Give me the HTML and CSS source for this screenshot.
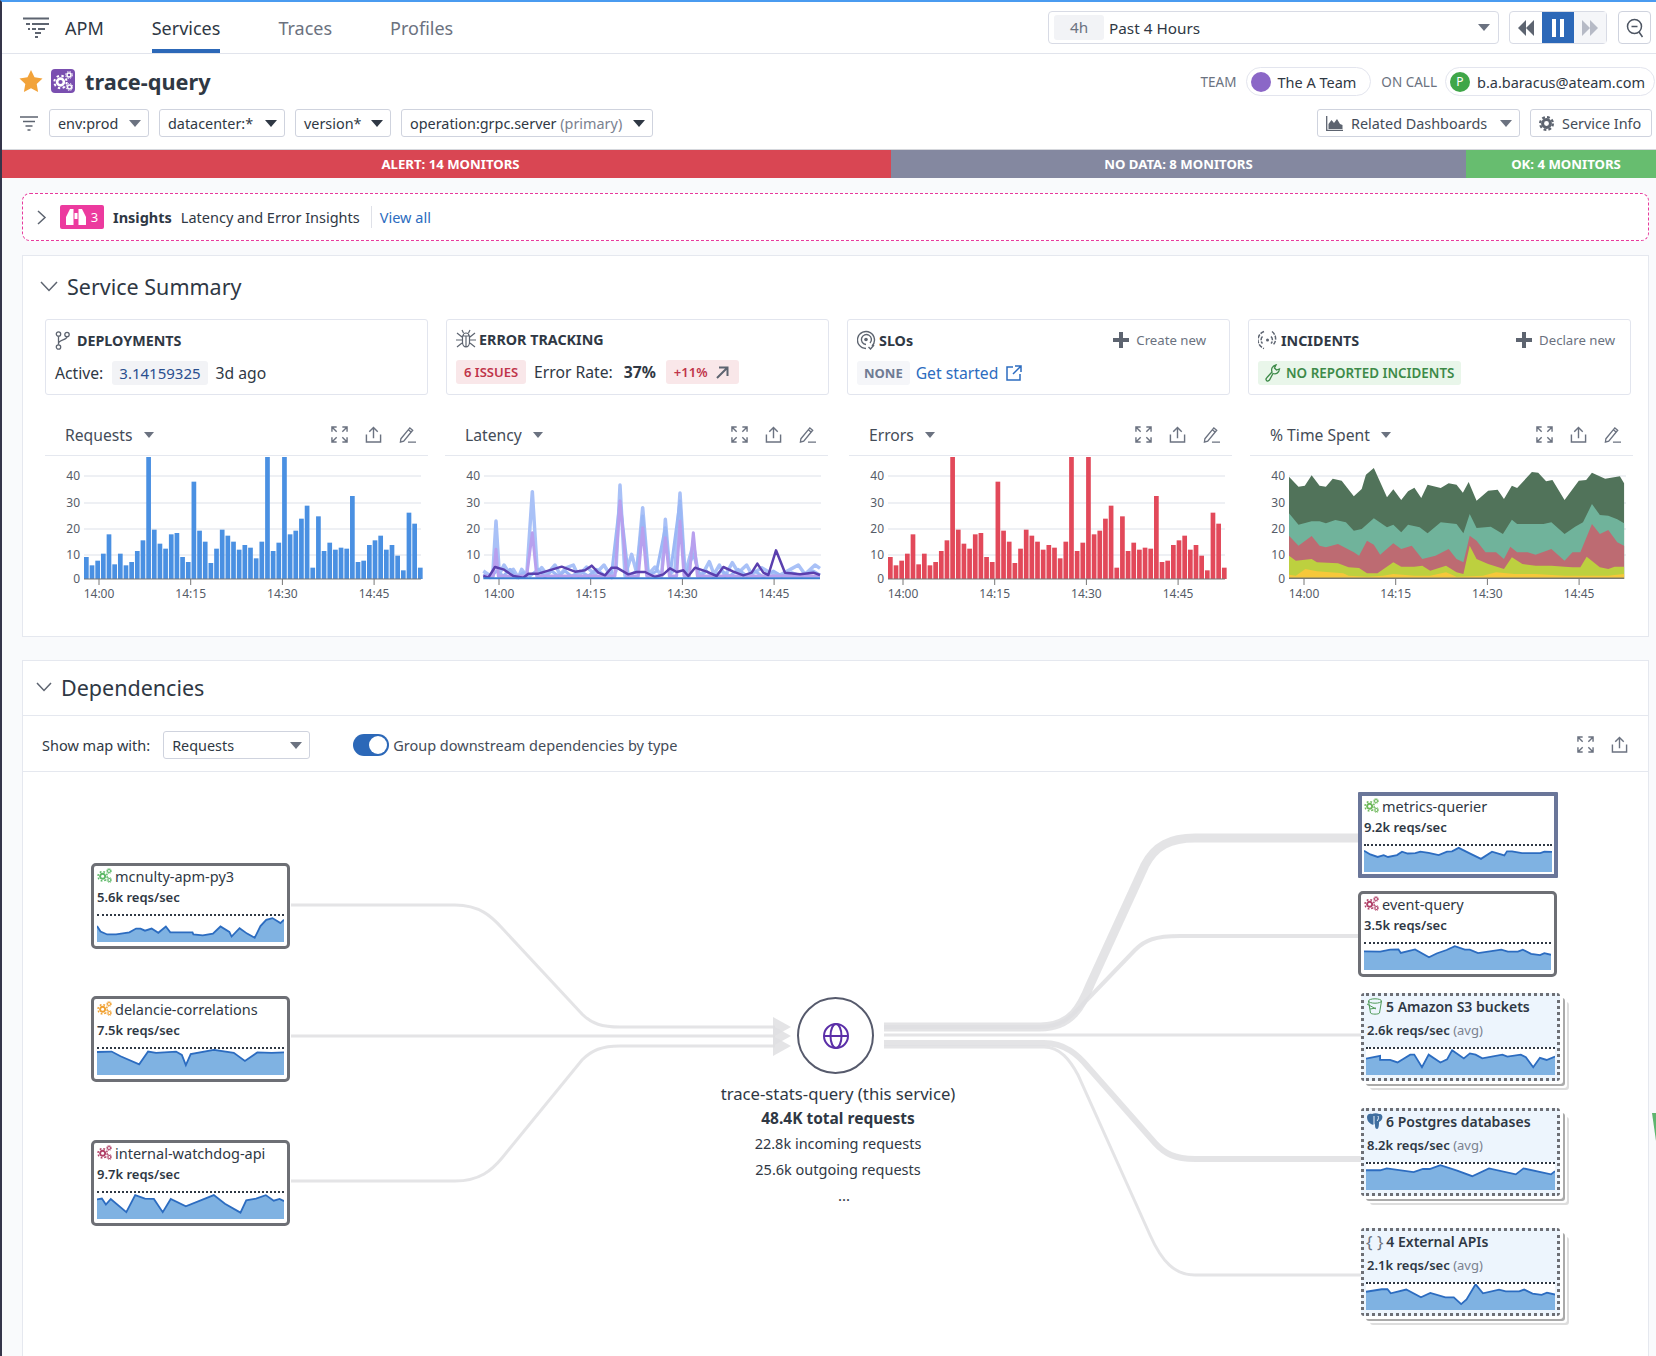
FILE: index.html
```html
<!DOCTYPE html>
<html lang="en">

<head>
  <meta name="viewport" content="width=device-width">
  <title>trace-query | APM</title>
  <link rel="stylesheet" href="styles.css">
  <script src="script.js" defer></script>
</head>

<body>
  <svg class="defs" width="0" height="0">
    <symbol id="gears" viewBox="0 0 20 20">
      <circle cx="7.5" cy="11" r="3.4" fill="none" stroke="currentColor" stroke-width="2.6" />
      <circle cx="7.5" cy="11" r="6.2" fill="none" stroke="currentColor" stroke-width="2" stroke-dasharray="2.4 2.5" />
      <circle cx="16" cy="4" r="2" fill="none" stroke="currentColor" stroke-width="1.5" />
      <circle cx="16" cy="4" r="3.4" fill="none" stroke="currentColor" stroke-width="1" stroke-dasharray="1.5 1.2" />
      <circle cx="16.5" cy="16" r="2" fill="none" stroke="currentColor" stroke-width="1.5" />
      <circle cx="16.5" cy="16" r="3.4" fill="none" stroke="currentColor" stroke-width="1" stroke-dasharray="1.5 1.2" />
    </symbol>
    <symbol id="expand" viewBox="0 0 18 18">
      <path d="M1 6V1h5M1 1l5 5M12 1h5v5M17 1l-5 5M1 12v5h5M1 17l5-5M17 12v5h-5M17 17l-5-5" fill="none" stroke="currentColor" stroke-width="1.5" />
    </symbol>
    <symbol id="upload" viewBox="0 0 18 18">
      <path d="M1.5 9v8h15V9M9 13V1.500M4.500 6L9 1.500 13.500 6" fill="none" stroke="currentColor" stroke-width="1.500" />
    </symbol>
    <symbol id="pencil" viewBox="0 0 18 18">
      <path d="M2 13.500L11.500 2l3 2.500L5 16l-3.500 1zM9.500 17H18M10 4l3 2.500" fill="none" stroke="currentColor" stroke-width="1.400" />
    </symbol>
    <symbol id="plus" viewBox="0 0 16 16">
      <path d="M8 0v16M0 8h16" stroke="currentColor" stroke-width="4" />
    </symbol>
    <symbol id="filters" viewBox="0 0 18 15">
      <path d="M0 1h18M3 5.500h12M5.500 10h7M7.500 14h3" stroke="currentColor" stroke-width="1.600" />
    </symbol>
  </svg>

  <nav class="topnav">
    <svg class="nav-logo" viewBox="0 0 26 21" width="26" height="21">
      <path d="M0 1.500h26M3 7h4M9 7h17M5 12h2M9 12h4M15 12h7M12 16h6M12 20h3" stroke="#5d6470" stroke-width="2" />
    </svg>
    <span class="nav-title">APM</span>
    <a class="tab active">Services</a>
    <a class="tab">Traces</a>
    <a class="tab">Profiles</a>
    <div class="nav-right">
      <div class="timepicker">
        <span class="time-chip">4h</span>
        <span class="time-label">Past 4 Hours</span>
        <span class="caret"></span>
      </div>
      <div class="playback">
        <span class="play-btn">
          <svg width="18" height="16" viewBox="0 0 18 16"><path d="M9 0v16L1 8zM17 0v16L9 8z" fill="#5d6470" /></svg>
        </span>
        <span class="play-btn pause">
          <svg width="14" height="18" viewBox="0 0 14 18"><path d="M1 0h4v18H1zM9 0h4v18H9z" fill="#fff" /></svg>
        </span>
        <span class="play-btn off">
          <svg width="18" height="16" viewBox="0 0 18 16"><path d="M1 0v16l8-8zM9 0v16l8-8z" fill="#b6bac6" /></svg>
        </span>
      </div>
      <span class="zoom-btn">
        <svg width="18" height="20" viewBox="0 0 18 20">
          <circle cx="8.500" cy="8.500" r="7" fill="none" stroke="#4d5562" stroke-width="1.500" />
          <path d="M5.500 8.500h6M13 14l3.500 5" stroke="#4d5562" stroke-width="1.500" />
        </svg>
      </span>
    </div>
  </nav>

  <header class="service-head">
    <div class="title-row">
      <svg class="star" width="24" height="22" viewBox="0 0 24 22">
        <path d="M12 0l3.500 7.300 8 1.100-5.800 5.600 1.400 8L12 18.200 4.900 22l1.400-8L.5 8.400l8-1.100z" fill="#f2a33a" />
      </svg>
      <span class="service-icon">
        <svg width="20" height="20"><use href="#gears" /></svg>
      </span>
      <h1>trace-query</h1>
      <div class="owners">
        <span class="owner-label">TEAM</span>
        <span class="owner-pill team"><i class="dot purple"></i>The A Team</span>
        <span class="owner-label oncall">ON CALL</span>
        <span class="owner-pill"><i class="dot green">P</i>b.a.baracus@ateam.com</span>
      </div>
    </div>
    <div class="filter-row">
      <svg class="filter-icon" width="18" height="15"><use href="#filters" /></svg>
      <span class="pill w-env">env:prod<span class="caret soft"></span></span>
      <span class="pill w-dc">datacenter:*<span class="caret"></span></span>
      <span class="pill w-ver">version*<span class="caret"></span></span>
      <span class="pill w-op">operation:grpc.server&nbsp;<em>(primary)</em><span class="caret"></span></span>
      <div class="filter-right">
        <span class="btn w-rel">
          <svg width="17" height="15" viewBox="0 0 17 15"><path d="M.7 0v14.300H17" fill="none" stroke="#5d6470" stroke-width="1.300" /><path d="M2.500 13V8l3-4 2.500 3 3-4 3 5 2.500 1v4z" fill="#5d6470" /></svg>
          Related Dashboards<span class="caret soft"></span>
        </span>
        <span class="btn w-info">
          <svg width="15" height="15" viewBox="0 0 16 16"><circle cx="8" cy="8" r="4.200" fill="none" stroke="#5d6470" stroke-width="3.200" /><circle cx="8" cy="8" r="6.800" fill="none" stroke="#5d6470" stroke-width="2.400" stroke-dasharray="3 2.300" /></svg>
          Service Info
        </span>
      </div>
    </div>
  </header>

  <div class="monitors">
    <span class="mon alert">ALERT: 14 MONITORS</span>
    <span class="mon nodata">NO DATA: 8 MONITORS</span>
    <span class="mon ok">OK: 4 MONITORS</span>
  </div>

  <section class="insights">
    <svg class="chev-right" width="10" height="15" viewBox="0 0 10 15"><path d="M1 1l7 6.500L1 14" fill="none" stroke="#5d6470" stroke-width="1.500" /></svg>
    <span class="insight-badge">
      <svg width="20" height="18" viewBox="0 0 20 18"><path d="M4 1h3.500v16H.5a.5.500 0 0 1-.5-.5V9zM16 1h-3.500v16h7a.5.500 0 0 0 .5-.5V9zM8.500 5h3v6h-3z" fill="#fff" /></svg>
      3
    </span>
    <b>Insights</b>
    <span class="insight-text">Latency and Error Insights</span>
    <a class="link view-all">View all</a>
  </section>

  <section class="panel summary">
    <h2 class="summary-title">
      <svg width="18" height="11" viewBox="0 0 18 11"><path d="M1 1l8 8.500L17 1" fill="none" stroke="#5d6470" stroke-width="1.500" /></svg>
      Service Summary
    </h2>
    <div class="cards">
      <div class="card">
        <div class="card-top">
          <svg class="card-icon wide" width="15" height="19" viewBox="0 0 15 19">
            <circle cx="3.500" cy="3" r="2.200" fill="none" stroke="#5d6470" stroke-width="1.300" />
            <circle cx="3.500" cy="16" r="2.200" fill="none" stroke="#5d6470" stroke-width="1.300" />
            <circle cx="12" cy="3.500" r="2.200" fill="none" stroke="#5d6470" stroke-width="1.300" />
            <path d="M3.500 5.200v8.600M12 5.700c0 3.500-8.500 3-8.500 7" fill="none" stroke="#5d6470" stroke-width="1.300" />
          </svg>
          <span class="card-title">DEPLOYMENTS</span>
        </div>
        <div class="card-line">
          <span>Active:</span>
          <span class="chip version">3.14159325</span>
          <span>3d ago</span>
        </div>
      </div>
      <div class="card">
        <div class="card-top shift">
          <svg class="card-icon" width="20" height="20" viewBox="0 0 20 20">
            <path d="M6.500 7h7v6a3.500 5 0 0 1-7 0zM10 7v11M7 7a3 3 0 0 1 6 0M1 4l5 4M19 4l-5 4M0 11h6M20 11h-6M1 18l5-4M19 18l-5-4M6 1l1.500 3M14 1l-1.500 3" fill="none" stroke="#5d6470" stroke-width="1.200" />
          </svg>
          <span class="card-title">ERROR TRACKING</span>
        </div>
        <div class="card-line">
          <span class="chip red issues">6 ISSUES</span>
          <span class="rate-label">Error Rate:</span>
          <b class="rate-value">37%</b>
          <span class="chip red trend">+11%
            <svg width="13" height="13" viewBox="0 0 13 13"><path d="M1 12L11 2M3 1.500h8.500V10" fill="none" stroke="#5d6470" stroke-width="2" /></svg>
          </span>
        </div>
      </div>
      <div class="card">
        <div class="card-top">
          <svg class="card-icon" width="19" height="20" viewBox="0 0 19 20">
            <path d="M15 16a8.500 8.500 0 1 0-6 2.500" fill="none" stroke="#5d6470" stroke-width="1.400" />
            <path d="M13 13a5 5 0 1 0-4 1.500" fill="none" stroke="#5d6470" stroke-width="1.400" />
            <circle cx="9" cy="9.500" r="1.800" fill="#5d6470" />
            <path d="M11.500 17l2 2 3.500-4" fill="none" stroke="#5d6470" stroke-width="1.400" />
          </svg>
          <span class="card-title">SLOs</span>
          <span class="card-action">
            <svg width="16" height="16"><use href="#plus" /></svg>Create new
          </span>
        </div>
        <div class="card-line">
          <span class="chip none">NONE</span>
          <a class="link started">Get started</a>
          <svg width="16" height="16" viewBox="0 0 16 16"><path d="M7 2H1v13h13V9M9 1h6v6M15 1L7 9" fill="none" stroke="#2c6cc0" stroke-width="1.500" /></svg>
        </div>
      </div>
      <div class="card">
        <div class="card-top">
          <svg class="card-icon" width="20" height="20" viewBox="0 0 20 20">
            <path d="M6 1.500A9 9 0 0 0 6 18.500M4.500 6.500a5 5 0 0 0 0 7M14 1.500a9 9 0 0 1 1.500 13M13 6.500a5 5 0 0 1 0 7" fill="none" stroke="#5d6470" stroke-width="1.500" stroke-dasharray="4 1.200" />
            <circle cx="9.500" cy="10" r="1.500" fill="#5d6470" />
          </svg>
          <span class="card-title">INCIDENTS</span>
          <span class="card-action declare">
            <svg width="16" height="16"><use href="#plus" /></svg>Declare new
          </span>
        </div>
        <div class="card-line">
          <span class="chip good">
            <svg width="16" height="18" viewBox="0 0 16 18"><path d="M1.500 16.500c-1-1-.5-2 .5-3l5-5.500c-1-3 0-6 4-7l-1.500 3 2 2 3-1c-.5 4-3.500 5.500-6.500 4.500l-3.500 6.500c-1 1-2.500 1.500-3 .5z" fill="none" stroke="#3d8a48" stroke-width="1.300" /></svg>
            NO REPORTED INCIDENTS
          </span>
        </div>
      </div>
    </div>

    <div class="charts">
      <div class="chart">
        <div class="chart-head">
          <span class="chart-name">Requests</span><span class="caret soft"></span>
          <span class="chart-tools">
            <svg width="17" height="17"><use href="#expand" /></svg>
            <svg width="17" height="17"><use href="#upload" /></svg>
            <svg width="17" height="17"><use href="#pencil" /></svg>
          </span>
        </div>
        <svg class="plot" data-kind="bars" data-color="#4a90e2" width="383" height="150"></svg>
      </div>
      <div class="chart">
        <div class="chart-head">
          <span class="chart-name">Latency</span><span class="caret soft"></span>
          <span class="chart-tools">
            <svg width="17" height="17"><use href="#expand" /></svg>
            <svg width="17" height="17"><use href="#upload" /></svg>
            <svg width="17" height="17"><use href="#pencil" /></svg>
          </span>
        </div>
        <svg class="plot" data-kind="lines" width="383" height="150"></svg>
      </div>
      <div class="chart">
        <div class="chart-head">
          <span class="chart-name">Errors</span><span class="caret soft"></span>
          <span class="chart-tools">
            <svg width="17" height="17"><use href="#expand" /></svg>
            <svg width="17" height="17"><use href="#upload" /></svg>
            <svg width="17" height="17"><use href="#pencil" /></svg>
          </span>
        </div>
        <svg class="plot" data-kind="bars" data-color="#e2495a" width="383" height="150"></svg>
      </div>
      <div class="chart">
        <div class="chart-head">
          <span class="chart-name">% Time Spent</span><span class="caret soft"></span>
          <span class="chart-tools">
            <svg width="17" height="17"><use href="#expand" /></svg>
            <svg width="17" height="17"><use href="#upload" /></svg>
            <svg width="17" height="17"><use href="#pencil" /></svg>
          </span>
        </div>
        <svg class="plot" data-kind="areas" width="383" height="150"></svg>
      </div>
    </div>
  </section>

  <section class="panel deps">
    <h2 class="deps-title">
      <svg width="16" height="10" viewBox="0 0 16 10"><path d="M1 1l7 7.500L15 1" fill="none" stroke="#5d6470" stroke-width="1.500" /></svg>
      Dependencies
    </h2>
    <div class="deps-tools">
      <span class="show-label">Show map with:</span>
      <span class="select">Requests<span class="caret soft"></span></span>
      <span class="toggle"><i></i></span>
      <span class="toggle-label">Group downstream dependencies by type</span>
      <span class="deps-icons">
        <svg width="17" height="17"><use href="#expand" /></svg>
        <svg width="17" height="17"><use href="#upload" /></svg>
      </span>
    </div>

    <div class="map">
      <svg class="edges" width="1626" height="584" viewBox="23 772 1626 584">
        <g fill="none" stroke="#dfdfe2" stroke-opacity="0.85">
          <path stroke-width="3" d="M291 905H455C480 905 492 917 502 928L582 1014C592 1024 602 1027 620 1027H775" />
          <path stroke-width="3" d="M291 1036H775" />
          <path stroke-width="3" d="M291 1181H455C480 1181 492 1170 502 1158L582 1060C592 1050 602 1046 620 1046H775" />
          <path stroke-width="9" d="M884 1027H1040C1072 1027 1082 1005 1090 985L1145 865C1155 846 1170 838 1195 838H1358" />
          <path stroke-width="4" d="M884 1027H1040C1065 1027 1075 1012 1085 1002L1135 950C1145 940 1155 936 1180 936H1358" />
          <path stroke-width="3" d="M884 1035H1361" />
          <path stroke-width="6" d="M884 1043H1044C1065 1043 1078 1055 1088 1067L1155 1143C1165 1154 1175 1159 1195 1159H1361" />
          <path stroke-width="3" d="M884 1047H1044C1060 1047 1070 1060 1078 1075L1150 1235C1162 1262 1175 1275 1195 1275H1361" />
        </g>
        <g fill="#dfdfe2" fill-opacity="0.85">
          <path d="M773 1017l18 10-18 10z" />
          <path d="M773 1026l18 10-18 10z" />
          <path d="M773 1036l18 10-18 10z" />
        </g>
      </svg>

      <div class="hub">
        <svg width="28" height="28" viewBox="0 0 28 28">
          <g fill="none" stroke="#5b2fa8" stroke-width="2">
            <circle cx="14" cy="14" r="12" />
            <ellipse cx="14" cy="14" rx="5.500" ry="12" />
            <path d="M2 14h24" />
          </g>
        </svg>
      </div>
      <div class="hub-text">
        <div class="hub-name">trace-stats-query (this service)</div>
        <div class="hub-total">48.4K total requests</div>
        <div class="hub-sub">22.8k incoming requests</div>
        <div class="hub-sub">25.6k outgoing requests</div>
        <div class="hub-more">...</div>
      </div>

      <div class="node n-mcnulty">
        <div class="node-name"><svg class="c-green" width="15" height="15"><use href="#gears" /></svg>mcnulty-apm-py3</div>
        <div class="node-rate">5.6k reqs/sec</div>
        <svg class="spark" preserveAspectRatio="none" data-box="217 588 421 62" data-points="217,612 225,625 240,632 260,632 290,627 305,618 315,618 325,623 340,618 355,628 372,613 382,627 432,627 434,632 455,634 478,630 495,613 515,626 520,637 538,617 555,630 572,640 585,612 598,597 612,593 630,605 638,597"></svg>
      </div>
      <div class="node n-delancie">
        <div class="node-name"><svg class="c-orange" width="15" height="15"><use href="#gears" /></svg>delancie-correlations</div>
        <div class="node-rate">7.5k reqs/sec</div>
        <svg class="spark" preserveAspectRatio="none" data-box="217 886 421 61" data-points="217,893 250,892 270,903 312,922 332,892 350,895 395,892 408,900 417,924 428,898 480,888 525,895 550,914 578,894 610,895 638,894"></svg>
      </div>
      <div class="node n-internal">
        <div class="node-name"><svg class="c-rose" width="15" height="15"><use href="#gears" /></svg>internal-watchdog-api</div>
        <div class="node-rate">9.7k reqs/sec</div>
        <svg class="spark" preserveAspectRatio="none" data-box="217 1205 421 61" data-points="217,1220 228,1218 237,1232 248,1219 283,1250 303,1210 325,1218 345,1219 365,1250 383,1219 417,1236 480,1210 505,1230 540,1251 553,1222 575,1218 597,1210 615,1223 628,1219 638,1224"></svg>
      </div>

      <div class="node selected n-metrics">
        <div class="node-name"><svg class="c-lime" width="15" height="15"><use href="#gears" /></svg>metrics-querier</div>
        <div class="node-rate">9.2k reqs/sec</div>
        <svg class="spark" preserveAspectRatio="none" data-box="191 192 564 83" data-points="191,207 210,219 232,227 250,221 263,227 290,221 305,210 322,216 345,215 360,210 385,214 415,221 440,210 455,209 475,198 505,214 542,233 575,210 612,222 620,209 635,209 665,215 720,215 732,210 755,211"></svg>
      </div>
      <div class="node n-event">
        <div class="node-name"><svg class="c-rose" width="15" height="15"><use href="#gears" /></svg>event-query</div>
        <div class="node-rate">3.5k reqs/sec</div>
        <svg class="spark" preserveAspectRatio="none" data-box="191 490 564 82" data-points="191,513 240,514 270,508 295,507 302,518 345,507 387,532 410,520 440,509 465,497 495,508 510,508 535,519 605,508 625,514 655,514 670,508 695,521 722,525 735,519 755,524"></svg>
      </div>

      <div class="node group n-s3">
        <div class="node-name">
          <svg width="17" height="17" viewBox="0 0 17 17"><g fill="none" stroke="#4f9a58" stroke-width="1"><ellipse cx="9" cy="3" rx="6.500" ry="2.200" /><path d="M2.500 3l2 12c1 1.500 8 1.500 9 0l2-12M1 6l9 5M4 11l6-1" /></g></svg>
          5 Amazon S3 buckets
        </div>
        <div class="node-rate">2.6k reqs/sec <em>(avg)</em></div>
        <svg class="spark" preserveAspectRatio="none" data-box="198 802 564 83" data-points="198,833 240,824 240,837 270,837 292,845 330,820 342,820 365,860 385,820 420,845 440,835 455,806 490,832 508,816 525,820 545,832 605,820 620,826 660,820 675,828 697,860 717,830 737,837 762,826"></svg>
      </div>
      <div class="node group n-postgres">
        <div class="node-name">
          <svg width="17" height="17" viewBox="0 0 17 17"><path d="M1 4C1 1 4 0 6 1c2-1 5-1 7 0 3 0 4 2 3 5-1 2-2 2-3 3 0 2 0 7-2 7-2 0-2-3-2-5-1 1-3 1-4 0-3-2-4-4-4-7z" fill="#3f6e9f" /><path d="M8 3v9M12 3c1 2 0 4-1 5" fill="none" stroke="#edf5fd" stroke-width="1" /></svg>
          6 Postgres databases
        </div>
        <div class="node-rate">8.2k reqs/sec <em>(avg)</em></div>
        <svg class="spark" preserveAspectRatio="none" data-box="198 247 564 83" data-points="198,267 240,267 260,261 340,273 368,263 388,263 420,251 470,268 515,286 565,261 645,280 668,261 750,280 762,270"></svg>
      </div>
      <div class="node group n-apis">
        <div class="node-name"><span class="braces">{ }</span>4 External APIs</div>
        <div class="node-rate">2.1k reqs/sec <em>(avg)</em></div>
        <svg class="spark" preserveAspectRatio="none" data-box="198 606 564 84" data-points="198,631 245,623 262,623 272,636 318,624 362,649 390,635 435,649 460,649 482,671 498,656 525,607 547,636 595,624 615,630 655,630 670,624 695,637 722,641 738,634 762,640"></svg>
      </div>
    </div>
  </section>

  <span class="edge-sliver"></span>
</body>

</html>
```
FILE: styles.css
```css
* {
  box-sizing: border-box;
}

html,
body {
  margin: 0;
  height: 1356px;
  overflow: hidden;
}

body {
  position: relative;
  background: #f9fafc;
  border-top: 2px solid #4a9bf0;
  border-left: 2px solid #35354a;
  font-family: "Noto Sans", sans-serif;
  font-size: 15px;
  color: #2f3844;
}

.defs {
  position: absolute;
}

.caret {
  display: inline-block;
  width: 0;
  height: 0;
  border-left: 6px solid transparent;
  border-right: 6px solid transparent;
  border-top: 7px solid #2f3844;
}

.caret.soft {
  border-top-color: #6b7280;
}

.link {
  color: #2c6cc0;
}

/* top bar */
.topnav {
  display: flex;
  align-items: center;
  height: 52px;
  padding-left: 21px;
  background: #fff;
  border-bottom: 1px solid #e1e4ec;
  font-size: 18px;
}

.nav-title {
  margin-left: 16px;
  margin-right: 48px;
  padding-top: 1px;
}

.tab {
  display: flex;
  align-items: center;
  height: 51px;
  margin-right: 58px;
  padding-top: 5px;
  color: #6b7280;
  border-bottom: 4px solid transparent;
}

.tab.active {
  color: #2f3844;
  border-bottom-color: #2c68b8;
}

.nav-right {
  display: flex;
  align-items: center;
  margin-left: auto;
  padding-right: 5px;
}

.timepicker {
  display: flex;
  align-items: center;
  width: 451px;
  height: 33px;
  padding: 0 8px 0 5px;
  border: 1px solid #d8dbe5;
  border-radius: 4px;
  font-size: 15.300px;
}

.time-chip {
  width: 50px;
  height: 25px;
  line-height: 25px;
  text-align: center;
  background: #f2f3f6;
  border-radius: 3px;
  color: #6b7280;
}

.time-label {
  margin-left: 5px;
}

.timepicker .caret {
  margin-left: auto;
  border-top-color: #6b7280;
}

.playback {
  display: flex;
  height: 33px;
  margin-left: 10px;
  border: 1px solid #d8dbe5;
  border-radius: 4px;
}

.play-btn {
  display: flex;
  align-items: center;
  justify-content: center;
  width: 32px;
}

.play-btn.pause {
  background: #2c68b8;
}

.play-btn.off {
  background: #f5f6f9;
}

.zoom-btn {
  display: flex;
  align-items: center;
  justify-content: center;
  width: 33px;
  height: 33px;
  margin-left: 11px;
  border: 1px solid #cfd3de;
  border-radius: 4px;
}

/* service header */
.service-head {
  height: 96px;
  background: #fff;
  border-bottom: 1px solid #d5d7dc;
}

.title-row {
  display: flex;
  align-items: center;
  height: 53px;
  padding-left: 17px;
}

.service-icon {
  display: flex;
  align-items: center;
  justify-content: center;
  width: 24px;
  height: 24px;
  margin-left: 8px;
  background: #7a4fb0;
  border-radius: 4px;
  color: #fff;
}

h1 {
  margin: 1px 0 0 10px;
  font-size: 21.700px;
  font-weight: 700;
}

.owners {
  display: flex;
  align-items: center;
  margin-left: auto;
  padding-top: 2px;
  padding-right: 1px;
}

.owner-label {
  margin-right: 10px;
  font-size: 13.500px;
  color: #6b7280;
}

.owner-label.oncall {
  margin-left: 10px;
  margin-right: 8px;
}

.owner-pill {
  display: flex;
  align-items: center;
  height: 29px;
  padding: 0 9px 0 4px;
  border: 1px solid #e3e5ee;
  border-radius: 15px;
  font-size: 14.500px;
}

.owner-pill.team {
  padding-right: 14px;
}

.dot {
  display: block;
  width: 20px;
  height: 20px;
  margin-right: 6px;
  border-radius: 50%;
  font-size: 12px;
  font-style: normal;
  line-height: 20px;
  text-align: center;
  color: #fff;
}

.dot.purple {
  background: #8b67c7;
}

.dot.green {
  background: #3fa648;
  margin-right: 7px;
}

.filter-row {
  display: flex;
  align-items: center;
  gap: 10px;
  height: 28px;
  padding-left: 18px;
  margin-top: 2px;
}

.filter-icon {
  margin-right: 1px;
  color: #5d6470;
}

.pill,
.btn,
.select {
  display: flex;
  align-items: center;
  height: 28px;
  padding-left: 8px;
  background: #fff;
  border: 1px solid #cfd3de;
  border-radius: 3px;
  font-size: 14.400px;
}

.pill .caret,
.btn .caret,
.select .caret {
  margin-left: auto;
  margin-right: 7px;
}

.pill em {
  font-style: normal;
  color: #7b8290;
}

.w-env {
  width: 100px;
}

.w-dc {
  width: 126px;
}

.w-ver {
  width: 96px;
}

.w-op {
  width: 252px;
}

.filter-right {
  display: flex;
  gap: 10px;
  margin-left: auto;
  padding-right: 4px;
}

.btn {
  gap: 8px;
  color: #444c58;
}

.w-rel {
  width: 203px;
}

.w-info {
  width: 122px;
}

/* monitors strip */
.monitors {
  display: flex;
  height: 28px;
  font-size: 13.200px;
  font-weight: 700;
  line-height: 28px;
  text-align: center;
  color: #fff;
}

.mon.alert {
  width: 889px;
  padding-left: 8px;
  background: #d94653;
}

.mon.nodata {
  width: 575px;
  background: #8488a0;
}

.mon.ok {
  flex: 1;
  padding-left: 10px;
  background: #67bd6f;
}

/* insights */
.insights {
  display: flex;
  align-items: center;
  height: 48px;
  margin: 15px 7px 0 20px;
  padding-left: 14px;
  background: #fff;
  border: 1.500px dashed #e8399c;
  border-radius: 8px;
  font-size: 14.500px;
}

.insight-badge {
  display: flex;
  align-items: center;
  justify-content: center;
  gap: 5px;
  width: 44px;
  height: 24px;
  margin-left: 13px;
  background: #ec3a9e;
  border-radius: 2px;
  color: #fff;
  font-size: 13px;
}

.insights b {
  margin-left: 9px;
  font-weight: 700;
}

.insight-text {
  margin-left: 9px;
  padding-right: 11px;
  border-right: 1px solid #dfe1e8;
  line-height: 22px;
}

.view-all {
  margin-left: 8px;
}

/* panels */
.panel {
  margin: 0 7px 0 20px;
  background: #fff;
  border: 1px solid #e5e8ef;
}

.summary {
  height: 382px;
  margin-top: 14px;
}

.summary-title {
  display: flex;
  align-items: center;
  gap: 9px;
  height: 63px;
  margin: 0;
  padding-left: 17px;
  padding-bottom: 3px;
  font-size: 21.500px;
  font-weight: 400;
}

.cards {
  display: grid;
  grid-template-columns: repeat(4, 383px);
  column-gap: 18px;
  padding-left: 22px;
}

.card {
  height: 76px;
  padding: 6px 24px 0 9px;
  border: 1px solid #e2e5ee;
  border-radius: 3px;
}

.card-top {
  display: flex;
  align-items: center;
  height: 28px;
}

.card-top.shift {
  margin-top: -1px;
  margin-bottom: 1px;
}

.card-icon {
  margin-right: 3px;
}

.card-icon.wide {
  margin-right: 7px;
}

.card-title {
  font-size: 14.300px;
  font-weight: 700;
}

.card-action {
  display: flex;
  align-items: center;
  gap: 7px;
  margin-left: auto;
  margin-right: -1px;
  font-size: 13.200px;
  color: #6b7280;
}

.card-action.declare {
  margin-right: -9px;
}

.card-action svg {
  color: #5d6470;
}

.card-line {
  display: flex;
  align-items: center;
  height: 28px;
  margin-top: 5px;
  gap: 8px;
  font-size: 15.700px;
}

.chip {
  display: inline-flex;
  align-items: center;
  height: 24px;
  padding: 0 8px;
  border-radius: 3px;
}

.chip.version {
  margin-left: 1px;
  padding: 0 7px;
  background: #f2f3f6;
  color: #2a4f8f;
  font-size: 15px;
}

.chip.red {
  background: #f9e7e9;
  color: #c0344a;
  font-size: 13px;
  font-weight: 600;
}

.chip.trend {
  gap: 8px;
  margin-left: 2px;
  padding-right: 10px;
}

.issues {
  font-weight: 700;
}

.rate-value {
  margin-left: 3px;
  font-weight: 700;
}

.chip.none {
  padding: 0 7px;
  background: #f5f6f9;
  color: #6f7b93;
  font-size: 13px;
  font-weight: 700;
}

.started {
  margin-left: -2px;
}

.chip.good {
  gap: 5px;
  padding: 0 7px;
  background: #e9f6ea;
  color: #3d8a48;
  font-size: 13.400px;
  font-weight: 600;
}

.charts {
  display: grid;
  grid-template-columns: 400px 404px 401px 383px;
  padding-left: 22px;
  margin-top: 24px;
}

.chart-head {
  display: flex;
  align-items: center;
  width: 383px;
  height: 37px;
  padding-left: 20px;
  padding-bottom: 5px;
  border-bottom: 1px solid #e5e8ef;
  font-size: 15.700px;
  color: #444c58;
}

.chart-head .caret {
  margin-left: 11px;
  border-left-width: 5px;
  border-right-width: 5px;
  border-top-width: 6px;
}

.chart-tools {
  display: flex;
  gap: 17px;
  margin-left: auto;
  padding-right: 12px;
  color: #6b7280;
}

.plot {
  display: block;
  margin-top: 1px;
  overflow: hidden;
  font-family: "Noto Sans", sans-serif;
}

/* dependencies */
.deps {
  height: 700px;
  margin-top: 23px;
}

.deps-title {
  display: flex;
  align-items: center;
  gap: 9px;
  height: 55px;
  margin: 0;
  padding-left: 13px;
  padding-bottom: 2px;
  font-size: 21.500px;
  font-weight: 400;
  border-bottom: 1px solid #e5e8ef;
}

.deps-tools {
  display: flex;
  align-items: center;
  height: 56px;
  padding-left: 19px;
  padding-top: 2px;
  border-bottom: 1px solid #e5e8ef;
  font-size: 14.500px;
}

.select {
  width: 147px;
  height: 28px;
  margin-left: 13px;
  padding-top: 2px;
}

.toggle {
  display: flex;
  align-items: center;
  justify-content: flex-end;
  width: 36px;
  height: 22px;
  margin-left: 43px;
  padding-right: 2px;
  background: #2c68b8;
  border-radius: 11px;
}

.toggle i {
  display: block;
  width: 18px;
  height: 18px;
  background: #fff;
  border-radius: 50%;
}

.toggle-label {
  margin-left: 4px;
  color: #444c58;
}

.deps-icons {
  display: flex;
  gap: 17px;
  margin-left: auto;
  padding-right: 20px;
  color: #6b7280;
}

.map {
  position: relative;
  height: 584px;
}

.edges {
  position: absolute;
  left: 0;
  top: 0;
}

.hub {
  position: absolute;
  left: 774px;
  top: 225px;
  display: flex;
  align-items: center;
  justify-content: center;
  width: 77px;
  height: 77px;
  background: #fff;
  border: 2px solid #565a6c;
  border-radius: 50%;
}

.hub-text {
  position: absolute;
  left: 665px;
  top: 309px;
  width: 300px;
  text-align: center;
}

.hub-name {
  font-size: 16.700px;
  line-height: 25px;
}

.hub-total {
  font-size: 15.500px;
  font-weight: 700;
  line-height: 25px;
}

.hub-sub {
  font-size: 14.500px;
  line-height: 25.500px;
}

.hub-more {
  margin-top: 3px;
  margin-left: 12px;
  line-height: 20px;
}

.node {
  position: absolute;
  width: 199px;
  height: 86px;
  padding: 0 3px;
  background: #fff;
  border: 3px solid #6d6f75;
  border-radius: 5px;
}

.node.selected {
  width: 200px;
  height: 86px;
  padding: 0 2px;
  border: 4px solid #6a7699;
  border-radius: 1px;
}

.node.group {
  width: 199px;
  height: 88px;
  padding: 1px 2px 0;
  background: #edf5fd;
  border: 3px dotted #6d6f75;
  border-radius: 3px;
  box-shadow: 3px 3px 0 #fff, 5px 5px 0 #aaa, 7px 7px 0 #fff, 9px 9px 0 #ddd;
}

.node-name {
  display: flex;
  align-items: center;
  gap: 3px;
  height: 19px;
  font-size: 14.500px;
  white-space: nowrap;
}

.group .node-name {
  font-size: 14px;
  font-weight: 600;
}

.node-rate {
  height: 25px;
  font-size: 13px;
  font-weight: 600;
  line-height: 25px;
  white-space: nowrap;
}

.group .node-rate {
  height: 29px;
  padding-left: 1px;
  line-height: 29px;
}

.node-rate em {
  font-style: normal;
  font-weight: 400;
  color: #7b8290;
}

.spark {
  display: block;
  width: 100%;
  height: 28px;
  margin-top: 4px;
  background: #fff;
  border-top: 2px dotted #2f3844;
}

.group .spark {
  margin-top: 2px;
}

.braces {
  font-size: 17px;
  font-weight: 400;
  color: #6b7280;
}

.c-green {
  color: #5cb867;
}

.c-orange {
  color: #f0a030;
}

.c-rose {
  color: #b04068;
}

.c-lime {
  color: #6db85a;
}

.n-mcnulty {
  left: 68px;
  top: 91px;
}

.n-delancie {
  left: 68px;
  top: 224px;
}

.n-internal {
  left: 68px;
  top: 368px;
}

.n-metrics {
  left: 1335px;
  top: 20px;
}

.n-event {
  left: 1335px;
  top: 119px;
}

.n-s3 {
  left: 1338px;
  top: 221px;
}

.n-postgres {
  left: 1338px;
  top: 336px;
}

.n-apis {
  left: 1338px;
  top: 456px;
}

.edge-sliver {
  position: absolute;
  right: 0;
  top: 1111px;
  width: 4px;
  height: 28px;
  background: #5fb56f;
  clip-path: polygon(0 0, 100% 0, 100% 100%);
}
```
FILE: script.js
```js
const SVG_NS = 'http://www.w3.org/2000/svg';

// tops of the bars, read off at 3x
const BAR_TOPS = [922, 947, 933, 912, 854, 944, 912, 947, 937, 904, 872, 618, 840, 882, 897, 854, 850, 922, 937, 696, 843, 876, 940, 897, 840, 858, 876, 900, 886, 894, 926, 876, 618, 904, 879, 618, 854, 843, 807, 768, 954, 800, 904, 879, 900, 894, 897, 739, 937, 933, 886, 872, 858, 900, 886, 918, 962, 789, 822, 954];

const LINES = [
  { color: '#a9c1f7', width: 3.5, points: '10,330 25,340 38,345 48,180 58,340 72,312 85,332 100,325 115,350 125,325 140,345 157,92 172,335 185,320 200,340 225,312 240,340 260,320 280,312 295,345 320,318 345,340 372,312 395,350 408,330 420,72 435,345 455,280 470,335 488,140 505,340 525,318 545,345 556,175 570,340 585,325 600,96 615,340 640,250 655,340 670,335 688,302 702,340 718,312 735,345 757,305 775,335 800,312 815,340 845,320 870,335 900,342 930,326 955,312 975,340 1005,312 1020,322' },
  { color: '#9bb8f5', width: 3, points: '10,340 30,350 50,330 70,345 90,325 110,350 130,335 150,345 175,325 195,348 215,330 235,345 255,330 275,346 300,330 325,345 350,325 375,345 395,335 420,120 432,225 445,345 470,330 488,165 505,345 530,330 556,200 570,345 600,120 615,345 640,280 660,345 680,330 700,348 725,330 750,345 775,325 800,345 825,330 850,348 880,330 905,345 935,335 965,345 1000,330 1020,342' },
  { color: '#b8a0ee', width: 3, points: '10,345 40,345 48,265 55,345 140,345 157,215 170,345 405,345 420,120 430,225 440,345 475,345 488,200 500,345 545,345 556,230 568,345 590,345 600,180 612,345 628,345 640,215 652,345 1020,345' },
  { color: '#5a3fae', width: 2.5, points: '10,345 25,350 45,318 70,325 100,345 130,350 145,338 175,338 245,317 285,332 315,328 335,314 355,335 375,343 395,320 410,320 445,340 470,333 495,333 525,348 550,340 570,322 590,333 610,328 625,345 645,320 680,332 710,345 730,318 760,332 790,343 815,335 832,308 850,335 865,342 888,268 915,335 960,340 1000,335 1020,342' },
  { color: '#3d7dd0', width: 2, points: '10,352 1020,352' },
];

const AREAS = [
  { color: '#51735a', points: '872,678 890,708 902,705 915,674 930,705 942,708 955,684 972,690 995,737 1010,715 1018,672 1033,652 1058,740 1070,716 1085,748 1098,722 1110,711 1123,742 1135,702 1160,712 1175,698 1190,702 1202,726 1213,694 1228,750 1250,720 1268,717 1280,745 1295,705 1305,712 1333,664 1345,666 1360,692 1372,688 1395,748 1422,690 1436,688 1447,666 1472,684 1500,677 1508,698' },
  { color: '#70b39b', points: '872,788 890,822 915,812 930,812 942,818 960,808 980,815 995,840 1010,835 1033,803 1058,830 1070,822 1085,845 1098,822 1120,830 1135,848 1160,815 1190,820 1203,848 1215,790 1228,832 1255,828 1278,850 1295,807 1305,820 1355,820 1370,815 1395,850 1415,828 1430,815 1447,760 1462,793 1478,795 1495,806 1508,818' },
  { color: '#bd6b72', points: '872,855 890,885 915,856 930,885 942,890 965,880 995,905 1005,915 1020,870 1033,882 1045,912 1070,878 1085,895 1105,885 1125,925 1150,915 1175,895 1190,925 1203,935 1215,855 1228,870 1245,905 1265,905 1280,925 1292,888 1305,905 1325,905 1340,912 1370,895 1395,930 1410,905 1425,905 1447,820 1462,850 1478,838 1495,875 1508,885' },
  { color: '#bdd03f', points: '872,915 885,930 915,925 925,935 965,938 985,950 1005,952 1020,968 1040,968 1070,935 1085,948 1110,948 1125,945 1140,960 1170,945 1190,965 1203,970 1215,885 1228,925 1250,940 1280,955 1295,920 1315,940 1340,945 1370,945 1395,948 1410,950 1425,950 1437,918 1462,950 1478,955 1490,948 1508,948' },
  { color: '#f6c83a', points: '872,972 885,975 903,955 925,962 975,968 985,975 1020,978 1050,975 1070,970 1110,975 1140,975 1170,965 1190,978 1240,975 1265,965 1300,970 1340,970 1395,975 1430,975 1462,975 1478,975 1490,973 1508,970' },
];

const PLOT_X = 39;
const PLOT_W = 337;
const AXIS_Y = 122;
const GRID = [[40, 19], [30, 46], [20, 72], [10, 98], [0, 122]];
const TIMES = ['14:00', '14:15', '14:30', '14:45'];

const add = (parent, name, attrs, text) => {
  const el = document.createElementNS(SVG_NS, name);
  for (let key in attrs) el.setAttribute(key, attrs[key]);
  if (text) el.textContent = text;
  parent.appendChild(el);
  return el;
};

const mapPoints = (points, fn) => points.split(' ').map(p => fn(...p.split(',').map(Number)).join(',')).join(' ');

const drawAxes = (svg) => {
  for (let [label, y] of GRID) {
    if (label) add(svg, 'line', { x1: PLOT_X, x2: PLOT_X + PLOT_W, y1: y, y2: y, stroke: '#e9ebf0', 'stroke-width': 1.5 });
    add(svg, 'text', { x: PLOT_X - 4, y: y + 4, 'text-anchor': 'end', 'font-size': 12, fill: '#555c68' }, String(label));
  }
};

const drawTicks = (svg) => {
  TIMES.forEach((time, i) => {
    const x = PLOT_X + 15 + i * 91.7;
    add(svg, 'line', { x1: x, x2: x, y1: AXIS_Y, y2: AXIS_Y + 6, stroke: '#777' });
    add(svg, 'text', { x, y: AXIS_Y + 19, 'text-anchor': 'middle', 'font-size': 12, fill: '#555c68' }, time);
  });
};

const drawBars = (svg, color) => {
  BAR_TOPS.forEach((top, i) => {
    const h = (985 - top) / 3 + 1;
    add(svg, 'rect', { x: PLOT_X + i * 5.66, y: AXIS_Y - h, width: 4.7, height: h, fill: color });
  });
  add(svg, 'line', { x1: PLOT_X, x2: PLOT_X + PLOT_W, y1: AXIS_Y, y2: AXIS_Y, stroke: '#777' });
};

const drawLines = (svg) => {
  for (let line of LINES) {
    add(svg, 'polyline', {
      points: mapPoints(line.points, (x, y) => [35 + x / 3, 4 + y / 3]),
      fill: 'none',
      stroke: line.color,
      'stroke-width': line.width,
      'stroke-linejoin': 'round',
    });
  }
};

const drawAreas = (svg) => {
  const fn = (x, y) => [(x - 872) / 1.898 + PLOT_X, AXIS_Y - (985 - y) / 3];
  for (let area of AREAS) {
    add(svg, 'polygon', { points: mapPoints(`872,985 ${area.points} 1508,985`, fn), fill: area.color });
  }
  add(svg, 'rect', { x: PLOT_X, y: AXIS_Y - 1.5, width: PLOT_W - 2, height: 1.5, fill: '#7a7a70' });
};

const drawSpark = (svg) => {
  const box = svg.dataset.box.split(' ').map(Number);
  const points = svg.dataset.points;
  const xs = points.split(' ').map(p => p.split(',')[0]);
  const bottom = box[1] + box[3];
  svg.setAttribute('viewBox', svg.dataset.box);
  add(svg, 'polygon', { points: `${xs[0]},${bottom} ${points} ${xs[xs.length - 1]},${bottom}`, fill: '#7fb2e2' });
  add(svg, 'polyline', { points, fill: 'none', stroke: '#2c6cc0', 'stroke-width': 1.8, 'vector-effect': 'non-scaling-stroke' });
};

addEventListener('DOMContentLoaded', () => {
  for (let svg of document.querySelectorAll('.plot')) {
    drawAxes(svg);
    if (svg.dataset.kind === 'bars') drawBars(svg, svg.dataset.color);
    if (svg.dataset.kind === 'lines') drawLines(svg);
    if (svg.dataset.kind === 'areas') drawAreas(svg);
    drawTicks(svg);
  }

  document.querySelectorAll('.spark').forEach(drawSpark);
});
```
